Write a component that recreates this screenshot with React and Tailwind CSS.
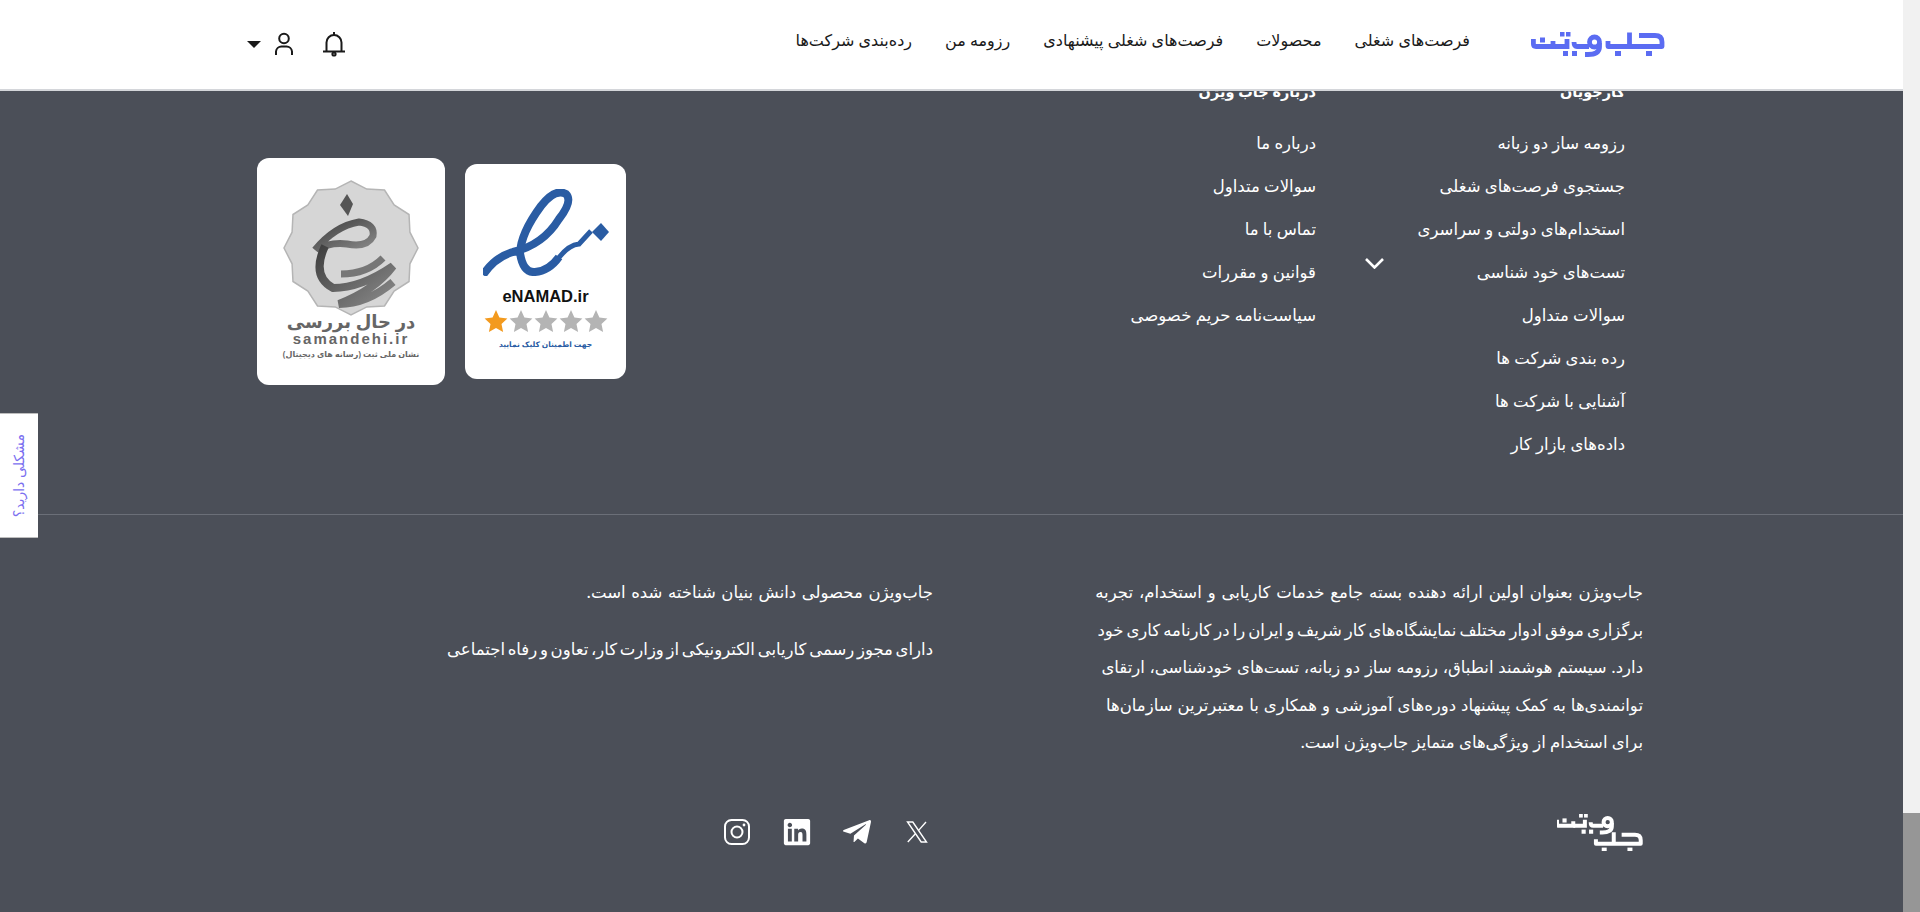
import { FaLinkedin, FaTelegramPlane } from "react-icons/fa";

const navItems = ["فرصت‌های شغلی", "محصولات", "فرصت‌های شغلی پیشنهادی", "رزومه من", "رده‌بندی شرکت‌ها"];

const seekerLinks = [
  "رزومه ساز دو زبانه",
  "جستجوی فرصت‌های شغلی",
  "استخدام‌های دولتی و سراسری",
  "تست‌های خود شناسی",
  "سوالات متداول",
  "رده بندی شرکت ها",
  "آشنایی با شرکت ها",
  "داده‌های بازار کار",
];

const aboutLinks = ["درباره ما", "سوالات متداول", "تماس با ما", "قوانین و مقررات", "سیاست‌نامه حریم خصوصی"];

const introLines = [
  { text: "جاب‌ویژن بعنوان اولین ارائه دهنده بسته جامع خدمات کاریابی و استخدام، تجربه", spacing: "[word-spacing:1.6px]" },
  { text: "برگزاری موفق ادوار مختلف نمایشگاه‌های کار شریف و ایران را در کارنامه کاری خود", spacing: "[word-spacing:-1.3px]" },
  { text: "دارد. سیستم هوشمند انطباق، رزومه ساز دو زبانه، تست‌های خودشناسی، ارتقای", spacing: "[word-spacing:0.4px]" },
  { text: "توانمندی‌ها به کمک پیشنهاد دوره‌های آموزشی و همکاری با معتبرترین سازمان‌ها", spacing: "[word-spacing:0.7px]" },
  { text: "برای استخدام از ویژگی‌های متمایز جاب‌ویژن است.", spacing: "" },
];

// logo word parts, drawn in a 134x26 box
const LogoJob = () => (
  <g>
    <path d="M108 4.5H124Q131 4.5 131 11V15.5H77V10" fill="none" strokeWidth="4.8" strokeLinejoin="round" />
    <path d="M98.5 1.5V15" fill="none" strokeWidth="4.8" />
    <rect x="115" y="20" width="6" height="5" stroke="none" />
    <rect x="84" y="20" width="6" height="5" stroke="none" />
  </g>
);

const LogoVizhen = () => (
  <g>
    <circle cx="63.5" cy="11" r="5" fill="none" strokeWidth="4.8" />
    <path d="M68.5 12V16Q68.5 23.5 57 23.5H54" fill="none" strokeWidth="4.8" />
    <path d="M58 15.5H46Q43 15.5 43 11" fill="none" strokeWidth="4.8" />
    <path d="M36 8V15.5H22" fill="none" strokeWidth="4.8" />
    <path d="M2.4 8V13Q2.4 15.5 5 15.5H22V10" fill="none" strokeWidth="4.8" />
    <rect x="29" y="1" width="4.5" height="4.5" stroke="none" />
    <rect x="35" y="1" width="4.5" height="4.5" stroke="none" />
    <rect x="32" y="20" width="5" height="5" stroke="none" />
    <rect x="41" y="20" width="5" height="5" stroke="none" />
    <rect x="9" y="6.5" width="5" height="5" stroke="none" />
  </g>
);

const HeaderLogo = () => (
  <svg viewBox="0 0 134 26" className="w-[134px] h-[26px] text-[#5b6cf2]" fill="currentColor" stroke="currentColor">
    <LogoJob />
    <LogoVizhen />
  </svg>
);

const FooterLogo = () => (
  <svg viewBox="0 0 86 37" className="w-[86px] h-[37px] text-white" fill="currentColor" stroke="currentColor">
    <g transform="translate(-2 -1) scale(0.83)">
      <LogoVizhen />
    </g>
    <g transform="translate(-25 17) scale(0.83)">
      <LogoJob />
    </g>
  </svg>
);

const BellIcon = () => (
  <svg viewBox="0 0 24 26" className="w-[24px] h-[26px]" fill="none" stroke="#1a1a1a" strokeWidth="2">
    <path d="M12 1V4" />
    <path d="M4.5 20V11.5A7.5 7.5 0 0 1 19.5 11.5V20" />
    <path d="M1 20.5H23" />
    <circle cx="12" cy="23" r="1.6" />
  </svg>
);

const UserIcon = () => (
  <svg viewBox="0 0 20 24" className="w-[20px] h-[24px]" fill="none" stroke="#1a1a1a" strokeWidth="2">
    <circle cx="10" cy="6.5" r="4.8" />
    <path d="M2 23V19.5A5.5 5.5 0 0 1 7.5 14.5H12.5A5.5 5.5 0 0 1 18 19.5V23" />
  </svg>
);

const InstagramIcon = () => (
  <svg viewBox="0 0 26 26" className="w-[26px] h-[26px]" fill="none" stroke="white" strokeWidth="2">
    <rect x="1" y="1" width="24" height="24" rx="6.5" />
    <circle cx="13" cy="13" r="5.5" />
    <circle cx="20" cy="6" r="1.4" fill="white" stroke="none" />
  </svg>
);

const XIcon = () => (
  <svg viewBox="0 0 22 22" className="w-[22px] h-[22px]" fill="none" stroke="white" strokeWidth="1.4">
    <path d="M1.5 1H6.8L20.5 21H15.2Z" />
    <path d="M20 1L12.4 9.6M9.4 12.8L1.8 21" />
  </svg>
);

const samandehiPoints = Array.from({ length: 24 }, (_, i) => {
  const r = i % 2 === 0 ? 67 : 61;
  const a = (i * Math.PI) / 12;
  return `${68 + r * Math.sin(a)},${68 - r * Math.cos(a)}`;
}).join(" ");

const SamandehiEmblem = () => (
  <svg viewBox="0 0 136 136" className="w-[136px] h-[136px]">
    <defs>
      <linearGradient id="emblemInk" x1="0" y1="0" x2="1" y2="1">
        <stop offset="0" stopColor="#3f3f3f" />
        <stop offset="1" stopColor="#8a8a8a" />
      </linearGradient>
    </defs>
    <polygon points={samandehiPoints} fill="#d6d6d6" stroke="#b5b5b5" strokeWidth="1.5" />
    <path d="M64 14L70 24L65 36L57 25Z" fill="#555" />
    <path d="M32 70Q52 46 76 42Q92 44 90 56Q84 68 64 64Q46 62 34 70" fill="none" stroke="url(#emblemInk)" strokeWidth="7" />
    <path d="M42 66Q28 96 50 108Q78 108 110 86Q92 110 56 124Q84 124 110 102" fill="none" stroke="url(#emblemInk)" strokeWidth="8" />
    <path d="M58 94Q84 94 100 78" fill="none" stroke="#777" strokeWidth="7" />
  </svg>
);

const EnamadMark = () => (
  <svg viewBox="0 0 126 87" className="w-[126px] h-[87px]" fill="none" stroke="#2a5ca3">
    <path d="M0 86Q12 68 30 63Q60 56 76 30Q90 12 83 5Q72 -1 58 17Q38 44 37 64Q40 84 52 83Q66 82 76 68" strokeWidth="8" />
    <path d="M72 74Q84 56 96 55L108 42" strokeWidth="5" />
    <path d="M118 34L126 43L118 52L109 43Z" fill="#2a5ca3" stroke="none" />
  </svg>
);

const Star = ({ color }) => (
  <svg viewBox="0 0 24 24" className="w-[24px] h-[24px]" fill={color}>
    <path d="M12 1L15.4 8.4L23.4 9.4L17.5 14.9L19.1 22.9L12 18.9L4.9 22.9L6.5 14.9L0.6 9.4L8.6 8.4Z" />
  </svg>
);

const LinkColumn = ({ title, links, className }) => (
  <div className={className}>
    <h3 className="font-bold text-[14.5px] h-6 mb-[28px] leading-6 whitespace-nowrap">{title}</h3>
    <ul className="flex flex-col gap-[19px]">
      {links.map((link) => (
        <li key={link} className="h-6 leading-6 whitespace-nowrap">
          {link}
        </li>
      ))}
    </ul>
  </div>
);

const App = () => {
  return (
    <div className="flex h-[912px] overflow-hidden bg-[#f1f1f1] font-['Noto_Sans','DejaVu_Sans',sans-serif]">
      {/* Page */}
      <div dir="rtl" className="relative flex-1 flex flex-col min-w-0">
        {/* Top Bar */}
        <header className="relative z-10 h-[91px] shrink-0 bg-white border-b-2 border-[#d4d6da] flex items-center justify-between pr-[238px] pl-[247px] pb-[1px]">
          <div className="flex items-center">
            <div className="ml-[61px]">
              <HeaderLogo />
            </div>
            <nav className="flex gap-[33px] pb-2 text-[#1a1a1a] whitespace-nowrap">
              {navItems.map((item) => (
                <a key={item}>{item}</a>
              ))}
            </nav>
          </div>
          <div className="flex items-center">
            <BellIcon />
            <div className="mr-[28px] ml-[13px]">
              <UserIcon />
            </div>
            <div className="w-0 h-0 border-x-[7px] border-x-transparent border-t-[7px] border-t-[#1a1a1a]" />
          </div>
        </header>

        {/* Footer */}
        <footer className="flex-1 bg-[#4b4f58] text-white text-[16.5px] overflow-hidden">
          <div className="h-[424px] border-b border-[#6b6f78] flex justify-between pr-[278px] pl-[257px]">
            <div className="flex -mt-[12px]">
              <LinkColumn title="کارجویان" links={seekerLinks} className="w-[225px]" />
              <div className="w-[84px] pr-[16px] pt-[179px]">
                <svg viewBox="0 0 19 11" className="w-[19px] h-[11px]" fill="none" stroke="white" strokeWidth="2.6">
                  <path d="M1 1L9.5 9.5L18 1" />
                </svg>
              </div>
              <LinkColumn title="درباره جاب ویژن" links={aboutLinks} />
            </div>

            <div className="flex items-center gap-5 h-[227px] mt-[67px]">
              <a className="w-[161px] h-[215px] bg-white rounded-xl flex flex-col items-center pt-[25px] text-center">
                <EnamadMark />
                <span className="mt-[10px] text-[16.5px] leading-5 font-bold text-[#111] font-['Liberation_Sans',sans-serif]">eNAMAD.ir</span>
                <span dir="ltr" className="flex mt-[3px] gap-px">
                  <Star color="#f39a1e" />
                  <Star color="#b4b4b4" />
                  <Star color="#b4b4b4" />
                  <Star color="#b4b4b4" />
                  <Star color="#b4b4b4" />
                </span>
                <span className="mt-[5px] text-[7.5px] leading-3 font-bold text-[#2a5ca3] whitespace-nowrap">جهت اطمینان کلیک نمایید</span>
              </a>
              <a className="w-[188px] h-[227px] bg-white rounded-xl flex flex-col items-center pt-[22px] text-center text-[#666]">
                <SamandehiEmblem />
                <span className="-mt-[5px] text-[18px] leading-5 font-bold tracking-[3px] whitespace-nowrap">در حال بررسی</span>
                <span className="text-[15px] leading-4 font-bold tracking-[2px] font-['Liberation_Sans',sans-serif]">samandehi.ir</span>
                <span className="text-[8px] leading-[14px] font-bold whitespace-nowrap">نشان ملی ثبت (رسانه های دیجیتال)</span>
              </a>
            </div>
          </div>

          <div className="pr-[260px]">
            <div className="flex gap-[158px] pt-[58px]">
              <div className="w-[552px] leading-[37.5px]">
                {introLines.map((line) => (
                  <p key={line.text} className={`whitespace-nowrap ${line.spacing}`}>
                    {line.text}
                  </p>
                ))}
              </div>
              <div className="flex flex-col gap-[19.5px] leading-[37.5px] whitespace-nowrap">
                <p className="[word-spacing:1.3px]">جاب‌ویژن محصولی دانش بنیان شناخته شده است.</p>
                <p className="[word-spacing:-1.6px]">دارای مجوز رسمی کاریابی الکترونیکی از وزارت کار، تعاون و رفاه اجتماعی</p>
              </div>
            </div>
            <div className="flex gap-[158px] items-center mt-[53px]">
              <div className="w-[552px]">
                <FooterLogo />
              </div>
              <div className="flex items-center gap-[30px] pr-[1px]">
                <span className="w-[30px] flex justify-center">
                  <XIcon />
                </span>
                <span className="w-[30px] flex justify-center">
                  <FaTelegramPlane className="w-[32px] h-[32px] text-white" />
                </span>
                <span className="w-[30px] flex justify-center">
                  <FaLinkedin className="w-[30px] h-[30px] text-white" />
                </span>
                <span className="w-[30px] flex justify-center">
                  <InstagramIcon />
                </span>
              </div>
            </div>
          </div>
        </footer>

        {/* Side tab */}
        <div className="absolute left-0 top-[413px] z-20 w-[38px] h-[125px] bg-white border-y border-[#bdbdbd] flex items-center justify-center">
          <span className="[writing-mode:vertical-rl] rotate-180 text-sm text-[#7b6ff0] whitespace-nowrap">مشکلی دارید؟</span>
        </div>
      </div>

      {/* Scrollbar */}
      <div className="w-[17px] shrink-0 flex flex-col justify-end">
        <div className="h-[99px] bg-[#969696]" />
      </div>
    </div>
  );
};

export default App;
